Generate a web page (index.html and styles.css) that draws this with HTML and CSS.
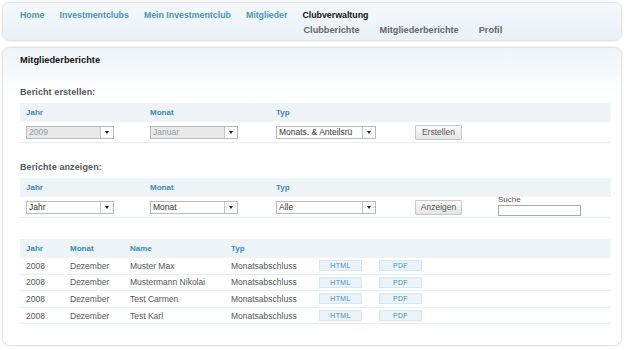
FILE: index.html
```html
<!DOCTYPE html>
<html lang="de">
<head>
    <meta charset="UTF-8">
    <title>Mitgliederberichte</title>
    <link rel="stylesheet" href="styles.css">
</head>
<body>
    <div class="nav">
        <ul class="menu">
            <li><a href="#">Home</a></li>
            <li><a href="#">Investmentclubs</a></li>
            <li><a href="#">Mein Investmentclub</a></li>
            <li><a href="#">Mitglieder</a></li>
            <li class="active">
                <a href="#">Clubverwaltung</a>
                <ul class="submenu">
                    <li><a href="#">Clubberichte</a></li>
                    <li><a href="#">Mitgliederberichte</a></li>
                    <li><a href="#">Profil</a></li>
                </ul>
            </li>
        </ul>
    </div>

    <div class="panel">
        <h1>Mitgliederberichte</h1>

        <h2>Bericht erstellen:</h2>
        <div class="form-table">
            <div class="row head">
                <span>Jahr</span>
                <span>Monat</span>
                <span>Typ</span>
            </div>
            <div class="row fields">
                <div class="select disabled"><span>2009</span><i></i></div>
                <div class="select disabled"><span>Januar</span><i></i></div>
                <div class="select wide"><span>Monats. &amp; Anteilsrü</span><i></i></div>
                <button class="btn">Erstellen</button>
            </div>
        </div>

        <h2 class="second">Berichte anzeigen:</h2>
        <div class="form-table">
            <div class="row head">
                <span>Jahr</span>
                <span>Monat</span>
                <span>Typ</span>
            </div>
            <div class="row fields">
                <div class="select"><span>Jahr</span><i></i></div>
                <div class="select"><span>Monat</span><i></i></div>
                <div class="select wide"><span>Alle</span><i></i></div>
                <button class="btn">Anzeigen</button>
                <label class="search">Suche<input type="text"></label>
            </div>
        </div>

        <div class="results">
            <div class="res-row head">
                <span>Jahr</span>
                <span>Monat</span>
                <span>Name</span>
                <span>Typ</span>
            </div>
            <div class="res-row">
                <span>2008</span><span>Dezember</span><span>Muster Max</span><span>Monatsabschluss</span>
                <a class="link-btn" href="#">HTML</a><a class="link-btn" href="#">PDF</a>
            </div>
            <div class="res-row">
                <span>2008</span><span>Dezember</span><span>Mustermann Nikolai</span><span>Monatsabschluss</span>
                <a class="link-btn" href="#">HTML</a><a class="link-btn" href="#">PDF</a>
            </div>
            <div class="res-row">
                <span>2008</span><span>Dezember</span><span>Test Carmen</span><span>Monatsabschluss</span>
                <a class="link-btn" href="#">HTML</a><a class="link-btn" href="#">PDF</a>
            </div>
            <div class="res-row">
                <span>2008</span><span>Dezember</span><span>Test Karl</span><span>Monatsabschluss</span>
                <a class="link-btn" href="#">HTML</a><a class="link-btn" href="#">PDF</a>
            </div>
        </div>
    </div>
</body>
</html>
```

FILE: styles.css
```css
* {
    margin: 0;
    padding: 0;
    box-sizing: border-box;
    font-family: "Liberation Sans", Arial, sans-serif;
}

body {
    background-color: #fff;
    padding: 3px 4px 0 3px;
    width: 625px;
    height: 350px;
    overflow: hidden;
}

a {
    text-decoration: none;
}

/* top navigation */
.nav {
    height: 37px;
    border-radius: 7px;
    background: linear-gradient(#f4f8fb, #e9f1f7);
    box-shadow: 0 0 2px 1px rgba(0,0,0,0.15);
    padding: 1px 0 0 17px;
}

.menu {
    list-style: none;
    display: flex;
}

.menu > li {
    margin-right: 15px;
    position: relative;
}

.menu > li > a {
    font-size: 8.8px;
    font-weight: bold;
    color: #4b95b5;
}

.menu > li.active > a {
    color: #111;
}

.submenu {
    list-style: none;
    display: flex;
    position: absolute;
    top: 15px;
    left: 1px;
    white-space: nowrap;
}

.submenu li {
    margin-right: 20px;
}

.submenu a {
    font-size: 9.2px;
    font-weight: bold;
    color: #666;
}

/* main panel */
.panel {
    margin-top: 8px;
    height: 297px;
    border-radius: 7px;
    background: linear-gradient(#eef4f8 0, #fdfeff 45px, #fff 60px);
    box-shadow: 0 0 2px 1px rgba(0,0,0,0.15);
    padding: 7px 10px 0 17px;
}

h1 {
    font-size: 9.3px;
    font-weight: bold;
    color: #111;
    margin-bottom: 22px;
}

h2 {
    font-size: 9px;
    font-weight: bold;
    color: #555;
    letter-spacing: 0.1px;
    margin-bottom: 6px;
}

h2.second {
    margin-top: 19px;
}

.form-table {
    border-bottom: 1px solid #e4eef5;
}

.row {
    display: grid;
    grid-template-columns: 124px 126px 139px 83px 1fr;
    padding-left: 6px;
    align-items: center;
}

.row.head {
    height: 19px;
    background-color: #edf3f7;
}

.row.head span,
.res-row.head span {
    font-size: 8px;
    font-weight: bold;
    color: #3b8ab0;
}

.row.fields {
    height: 20px;
}

.select {
    width: 88px;
    height: 13px;
    border: 1px solid #b9b9b9;
    background-color: #fff;
    display: flex;
    font-size: 8.5px;
    color: #333;
}

.select.wide {
    width: 100px;
}

.select.disabled {
    background-color: #e8e8e8;
    color: #999;
}

.select span {
    flex: 1;
    padding-left: 2px;
    line-height: 11px;
    overflow: hidden;
    white-space: nowrap;
}

.select i {
    width: 13px;
    border-left: 1px solid #c4c4c4;
    background-color: #fbfbfb;
    position: relative;
}

.select i::after {
    content: "";
    position: absolute;
    left: 4px;
    top: 4px;
    border-left: 2.5px solid transparent;
    border-right: 2.5px solid transparent;
    border-top: 3px solid #222;
}

.btn {
    width: 47px;
    height: 15px;
    font-size: 8.5px;
    color: #555;
    background: linear-gradient(#fafafa, #e4e4e4);
    border: 1px solid #c8c8c8;
    border-radius: 1px;
}

.search {
    font-size: 8px;
    color: #555;
    display: flex;
    flex-direction: column;
    margin-top: -4px;
}

.search input {
    width: 83px;
    height: 11px;
    border: 1px solid #aaa;
    margin-top: 1px;
}

/* results */
.results {
    margin-top: 21px;
}

.res-row {
    display: grid;
    grid-template-columns: 44px 60px 101px 88px 60px 60px 1fr;
    padding-left: 6px;
    height: 16.6px;
    align-items: center;
    border-bottom: 1px solid #e4eef5;
    font-size: 8.5px;
    color: #555;
}

.res-row.head {
    height: 19px;
    background-color: #edf3f7;
    border-bottom: none;
}

.link-btn {
    width: 43px;
    height: 11px;
    background-color: #e9f3f9;
    border: 1px solid #d3e6f1;
    font-size: 7px;
    color: #4a8db0;
    text-align: center;
    line-height: 9px;
    letter-spacing: 0.3px;
}
```
